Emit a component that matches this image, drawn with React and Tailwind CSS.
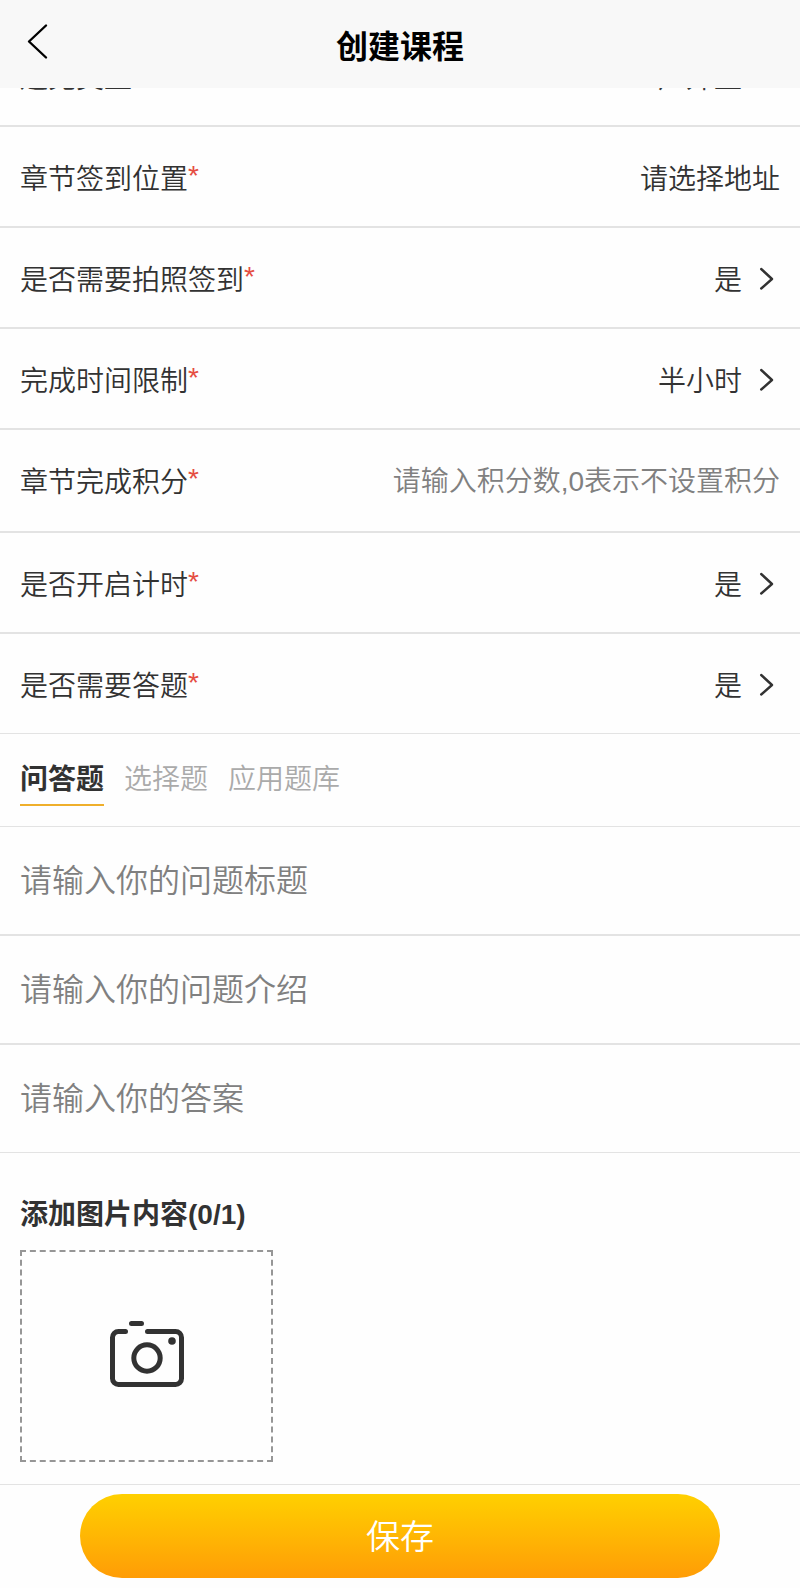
import React from "react";

function Chevron() {
  return (
    <svg className="ml-4 h-7 w-[22px] shrink-0" viewBox="0 0 22 28" fill="none" stroke="#323232" strokeWidth="2.4" strokeLinecap="round" strokeLinejoin="round">
      <path d="M3.2 4 L14 14 L3.2 23.500" />
    </svg>
  );
}

function Row({ label, value, arrow, placeholder, className = "h-[101px] border-b-2 pt-0.5", textClass = "pt-1" }) {
  return (
    <div className={`flex shrink-0 items-center justify-between border-[#e3e3e3] px-5 ${className}`}>
      <div className="flex">
        <span className={textClass}>{label}</span>
        <span className="text-[#e54d42]">*</span>
      </div>
      <div className="flex items-center">
        <span className={placeholder ? "pt-0.5 text-[#808080]" : textClass}>{value}</span>
        {arrow && <Chevron />}
      </div>
    </div>
  );
}

function Field({ text, className }) {
  return (
    <div className={`flex shrink-0 items-center border-[#e3e3e3] px-5 text-[32px] text-[#808080] ${className}`}>
      {text}
    </div>
  );
}

export default function App() {
  return (
    <div className="flex h-[1588px] w-[800px] flex-col overflow-hidden bg-[#fefefe] font-['Liberation_Sans','Noto_Sans_CJK_SC',sans-serif] text-[28px] leading-10 font-[350] text-[#323232]">
      <header className="z-10 grid h-[88px] shrink-0 grid-cols-[1fr_auto_1fr] items-center bg-[#f8f8f8] px-5">
        <svg className="mb-1.5 h-10 w-10" viewBox="0 0 40 40" fill="none" stroke="#000" strokeWidth="2.4" strokeLinecap="round" strokeLinejoin="round">
          <path d="M26 4.5 L9 20.5 L26 36.5" />
        </svg>
        <h1 className="pt-1.5 text-[32px] font-bold text-black">创建课程</h1>
      </header>
      <main className="flex flex-1 flex-col">
        <Row label="避免类型" value="户外型" arrow className="-mt-[62px] h-[101px] border-b-2 pt-0.5" textClass="pt-[5px]" />
        <Row label="章节签到位置" value="请选择地址" />
        <Row label="是否需要拍照签到" value="是" arrow />
        <Row label="完成时间限制" value="半小时" arrow />
        <Row label="章节完成积分" value="请输入积分数,0表示不设置积分" placeholder className="h-[103px] border-b-2" />
        <Row label="是否开启计时" value="是" arrow />
        <Row label="是否需要答题" value="是" arrow className="h-[100px] border-b pt-0.5" />
        <nav className="flex h-[93px] shrink-0 gap-5 border-b border-[#e3e3e3] px-5 pt-[26px] text-[#aaa]">
          <div className="h-[46px] border-b-2 border-[#efaf2b] font-bold text-[#323232]">问答题</div>
          <div>选择题</div>
          <div>应用题库</div>
        </nav>
        <Field text="请输入你的问题标题" className="h-[109px] border-b-2" />
        <Field text="请输入你的问题介绍" className="h-[109px] border-b-2" />
        <Field text="请输入你的答案" className="h-[108px] border-b" />
        <section className="flex h-[332px] shrink-0 flex-col border-b border-[#e3e3e3] px-5 pt-[42px]">
          <h2 className="font-bold">添加图片内容(0/1)</h2>
          <div className="mt-[15px] flex h-[212px] w-[253px] items-center justify-center border-2 border-dashed border-[#969696] pb-1">
            <svg className="h-[66px] w-[74px]" viewBox="0 0 74 66" fill="none" stroke="#323232" strokeWidth="5" strokeLinecap="round" strokeLinejoin="round">
              <path d="M21.500 2.500H31.500M15.500 10.500H8.500a6 6 0 0 0-6 6V57.500a6 6 0 0 0 6 6H65.500a6 6 0 0 0 6-6V16.500a6 6 0 0 0-6-6H37.500" />
              <circle cx="37" cy="37" r="13.200" />
              <circle cx="62" cy="20" r="3.800" fill="#323232" stroke="none" />
            </svg>
          </div>
        </section>
        <footer className="flex flex-1 justify-center pt-[9px]">
          <button className="h-[84px] w-[640px] rounded-full bg-linear-to-b from-[#ffd000] to-[#ff9c06] pt-0.5 text-[34px] text-white">保存</button>
        </footer>
      </main>
    </div>
  );
}
